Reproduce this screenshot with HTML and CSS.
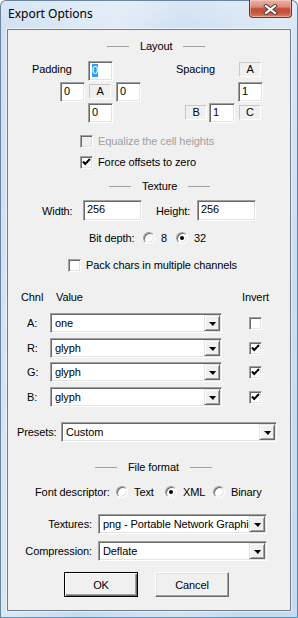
FILE: index.html
```html
<!DOCTYPE html>
<html>
<head>
<meta charset="utf-8">
<title>Export Options</title>
<link rel="stylesheet" href="styles.css">
</head>
<body>
<div class="window">
  <div class="titlebar">
    <span class="title">Export Options</span>
    <div class="close">
      <svg width="15" height="11" viewBox="0 0 15 11">
        <path d="M3 2 L12 9 M12 2 L3 9" stroke="#4a3a3a" stroke-width="4" stroke-linecap="square" fill="none"/>
        <path d="M3 2 L12 9 M12 2 L3 9" stroke="#ffffff" stroke-width="2.2" stroke-linecap="square" fill="none"/>
      </svg>
    </div>
  </div>
  <div class="client">
    <div class="hdr hdr-layout"><span class="hline"></span><span class="htext">Layout</span><span class="hline"></span></div>

    <div class="layout-block">
      <div class="pad-grid">
        <span class="glabel pad-lbl">Padding</span>
        <div class="edit g-c4 g-r1"><span class="sel">0</span></div>
        <div class="edit g-c2 g-r2">0</div>
        <div class="stat g-c4 g-r2">A</div>
        <div class="edit g-c6 g-r2">0</div>
        <div class="edit g-c4 g-r3">0</div>
      </div>
      <div class="sp-grid">
        <span class="glabel sp-lbl">Spacing</span>
        <div class="stat g-c6 g-r1">A</div>
        <div class="edit g-c6 g-r2">1</div>
        <div class="stat g-c2 g-r3">B</div>
        <div class="edit g-c4 g-r3">1</div>
        <div class="stat g-c6 g-r3">C</div>
      </div>
    </div>

    <div class="chk-row row-eq disabled"><span class="cbox"></span><span>Equalize the cell heights</span></div>
    <div class="chk-row row-force"><span class="cbox checked"><svg width="9" height="9" viewBox="0 0 9 9"><path d="M1 3.5 L3.2 6 L8 1" stroke="#000" stroke-width="2" fill="none"/></svg></span><span>Force offsets to zero</span></div>

    <div class="hdr hdr-texture"><span class="hline"></span><span class="htext">Texture</span><span class="hline"></span></div>

    <div class="wh-row">
      <span class="wlbl">Width:</span>
      <div class="edit wh-edit">256</div>
      <span class="wlbl hlbl">Height:</span>
      <div class="edit wh-edit">256</div>
    </div>

    <div class="radio-row bit-row">
      <span class="rlabel bit-lbl">Bit depth:</span>
      <span class="ritem bit-8"><span class="radio"></span><span>8</span></span>
      <span class="ritem"><span class="radio on"></span><span>32</span></span>
    </div>

    <div class="chk-row row-pack"><span class="cbox"></span><span>Pack chars in multiple channels</span></div>

    <div class="tbl-head"><span class="th-chnl">Chnl</span><span class="th-val">Value</span><span class="th-inv">Invert</span></div>

    <div class="ch-row row-a">
      <span class="ch-lbl">A:</span>
      <div class="combo ch-combo"><span class="cval">one</span><span class="dbtn"><i class="arrow"></i></span></div>
      <span class="cbox"></span>
    </div>
    <div class="ch-row row-r">
      <span class="ch-lbl">R:</span>
      <div class="combo ch-combo"><span class="cval">glyph</span><span class="dbtn"><i class="arrow"></i></span></div>
      <span class="cbox checked"><svg width="9" height="9" viewBox="0 0 9 9"><path d="M1 3.5 L3.2 6 L8 1" stroke="#000" stroke-width="2" fill="none"/></svg></span>
    </div>
    <div class="ch-row row-g">
      <span class="ch-lbl">G:</span>
      <div class="combo ch-combo"><span class="cval">glyph</span><span class="dbtn"><i class="arrow"></i></span></div>
      <span class="cbox checked"><svg width="9" height="9" viewBox="0 0 9 9"><path d="M1 3.5 L3.2 6 L8 1" stroke="#000" stroke-width="2" fill="none"/></svg></span>
    </div>
    <div class="ch-row row-b">
      <span class="ch-lbl">B:</span>
      <div class="combo ch-combo"><span class="cval">glyph</span><span class="dbtn"><i class="arrow"></i></span></div>
      <span class="cbox checked"><svg width="9" height="9" viewBox="0 0 9 9"><path d="M1 3.5 L3.2 6 L8 1" stroke="#000" stroke-width="2" fill="none"/></svg></span>
    </div>

    <div class="preset-row">
      <span class="pre-lbl">Presets:</span>
      <div class="combo pre-combo"><span class="cval">Custom</span><span class="dbtn"><i class="arrow"></i></span></div>
    </div>

    <div class="hdr hdr-file"><span class="hline"></span><span class="htext">File format</span><span class="hline"></span></div>

    <div class="radio-row fd-row">
      <span class="rlabel fd-lbl">Font descriptor:</span>
      <span class="ritem fd-text"><span class="radio"></span><span>Text</span></span>
      <span class="ritem fd-xml"><span class="radio on"></span><span>XML</span></span>
      <span class="ritem"><span class="radio"></span><span>Binary</span></span>
    </div>

    <div class="form-row row-tex">
      <span class="form-lbl">Textures:</span>
      <div class="combo form-combo"><span class="cval">png - Portable Network Graphics</span><span class="dbtn"><i class="arrow"></i></span></div>
    </div>
    <div class="form-row row-comp">
      <span class="form-lbl">Compression:</span>
      <div class="combo form-combo"><span class="cval">Deflate</span><span class="dbtn"><i class="arrow"></i></span></div>
    </div>

    <div class="btn-row">
      <div class="btn default">OK</div>
      <div class="btn">Cancel</div>
    </div>
  </div>
</div>
</body>
</html>
```

FILE: styles.css
```css
* { box-sizing: border-box; }
html, body { margin: 0; padding: 0; }
body {
  width: 298px;
  height: 618px;
  overflow: hidden;
  background: #ffffff;
  font-family: "Liberation Sans", Arial, sans-serif;
  font-size: 11px;
  letter-spacing: -0.1px;
  color: #000;
}

.window {
  width: 298px;
  height: 618px;
  display: flex;
  flex-direction: column;
  border: 1px solid #6a869f;
  border-bottom-color: #3aa2d6;
  border-radius: 6px 6px 0 0;
  padding: 0 6px 6px 6px;
  background:
    linear-gradient(100deg, rgba(255,255,255,0) 0%, rgba(255,255,255,0.35) 30%, rgba(255,255,255,0) 45%, rgba(255,255,255,0.25) 70%, rgba(255,255,255,0) 85%),
    linear-gradient(180deg, #d9e7f5 0px, #cfe0f2 30px, #c6dbf0 100%);
}

.titlebar {
  height: 28px;
  display: flex;
  align-items: flex-start;
  flex: none;
}
.title {
  font-family: "Noto Sans", "Open Sans", sans-serif;
  font-size: 12px;
  letter-spacing: 0;
  line-height: 14px;
  margin-top: 6px;
  margin-left: 1px;
  color: #000;
}
.close {
  margin-left: auto;
  margin-right: -1px;
  margin-top: -1px;
  width: 43px;
  height: 18px;
  border: 1px solid #7b2e24;
  border-top: none;
  border-radius: 0 0 4px 4px;
  background: linear-gradient(180deg, #eab3a7 0%, #dc8c7c 40%, #c24b36 52%, #c95a43 80%, #dd8a6e 100%);
  box-shadow: inset 0 0 0 1px rgba(255,210,200,0.5);
  display: flex;
  align-items: center;
  justify-content: center;
  padding-top: 1px;
}

.client {
  flex: 1;
  display: flex;
  flex-direction: column;
  background: #f0f0f0;
  border: 1px solid #6f7c8a;
  box-shadow: 0 0 0 1px rgba(255,255,255,0.55);
}

/* section headers */
.hdr {
  display: flex;
  align-items: center;
  height: 14px;
}
.hline {
  width: 22px;
  height: 1px;
  background: #a0a0a0;
}
.htext { margin: 0 11px; line-height: 14px; }
.hdr-layout { margin-top: 9px; padding-left: 99px; }
.hdr-texture { margin-top: 10px; padding-left: 101px; }
.hdr-file { margin-top: 18px; padding-left: 87px; }

/* 3D controls */
.edit {
  background: #fff;
  border: 1px solid;
  border-color: #a0a0a0 #ffffff #ffffff #a0a0a0;
  box-shadow: inset 1px 1px 0 #696969, inset -1px -1px 0 #e3e3e3;
  padding: 2px 0 0 3px;
  line-height: 13px;
  white-space: nowrap;
  overflow: hidden;
}
.sel {
  background: #3399ff;
  color: #fff;
  display: inline-block;
}
.stat {
  width: 22px;
  height: 15px;
  margin: 2px 0 0 1px;
  border: 1px solid;
  border-color: #c8c8c8 #ffffff #ffffff #c8c8c8;
  text-align: center;
  line-height: 13px;
}

/* layout block */
.layout-block {
  display: flex;
  margin-top: 8px;
  padding-left: 24px;
  gap: 35px;
}
.pad-grid, .sp-grid {
  display: grid;
  grid-template-rows: 20px 20px 20px;
  row-gap: 1px;
}
.pad-grid { grid-template-columns: 28px 25px 3px 25px 3px 25px; }
.sp-grid { grid-template-columns: 8px 21px 4px 26px 3px 25px; }
.glabel { line-height: 14px; padding-top: 1px; white-space: nowrap; }
.pad-lbl { grid-column: 1 / 4; grid-row: 1; }
.sp-lbl { grid-column: 1 / 5; grid-row: 1; }
.g-c2 { grid-column: 2; }
.g-c4 { grid-column: 4; }
.g-c6 { grid-column: 6; }
.g-r1 { grid-row: 1; }
.g-r2 { grid-row: 2; }
.g-r3 { grid-row: 3; }
.sp-grid .stat.g-r1 { margin-top: 1px; }

/* checkboxes */
.cbox {
  width: 13px;
  height: 13px;
  flex: none;
  background: #fff;
  border: 1px solid;
  border-color: #a0a0a0 #ffffff #ffffff #a0a0a0;
  box-shadow: inset 1px 1px 0 #696969, inset -1px -1px 0 #e3e3e3;
  display: flex;
  align-items: center;
  justify-content: center;
}
.cbox svg { display: block; }
.chk-row {
  display: flex;
  align-items: center;
  height: 13px;
  gap: 5px;
  line-height: 13px;
}
.row-eq { margin-top: 12px; padding-left: 72px; }
.row-force { margin-top: 8px; padding-left: 72px; }
.row-pack { margin-top: 14px; padding-left: 60px; }
.disabled { color: #a0a0a0; }
.disabled .cbox { background: #f0f0f0; }

/* width / height */
.wh-row {
  display: flex;
  align-items: center;
  height: 21px;
  margin-top: 7px;
  padding-left: 34px;
}
.wlbl { width: 41px; }
.hlbl { margin-left: 14px; }
.wh-edit { width: 59px; height: 21px; padding-top: 2px; }

/* radios */
.radio-row {
  display: flex;
  align-items: center;
  height: 14px;
}
.bit-row { margin-top: 10px; padding-left: 81px; }
.bit-lbl { width: 54px; }
.fd-row { margin-top: 11px; padding-left: 27px; }
.fd-lbl { width: 81px; }
.ritem { display: flex; align-items: center; gap: 6px; }
.bit-8 { width: 33px; }
.fd-text { width: 49px; }
.fd-xml { width: 48px; }
.radio {
  width: 12px;
  height: 12px;
  border-radius: 50%;
  background: #fff;
  border: 1px solid;
  border-color: #a0a0a0 #ffffff #ffffff #a0a0a0;
  box-shadow: inset 1px 1px 0 #696969, inset -1px -1px 0 #e3e3e3;
  display: flex;
  align-items: center;
  justify-content: center;
}
.radio.on::after {
  content: "";
  width: 4px;
  height: 4px;
  border-radius: 50%;
  background: #000;
}

/* channel table */
.tbl-head {
  display: flex;
  height: 14px;
  line-height: 14px;
  margin-top: 18px;
  padding-left: 13px;
}
.th-chnl { width: 35px; }
.th-val { width: 186px; }
.ch-row {
  display: flex;
  align-items: center;
  height: 20px;
  padding-left: 19px;
}
.row-a { margin-top: 9px; }
.row-r { margin-top: 5px; }
.row-g { margin-top: 4px; }
.row-b { margin-top: 5px; }
.ch-lbl { width: 23px; }
.ch-combo { width: 172px; margin-right: 27px; }

.combo {
  height: 20px;
  display: flex;
  background: #fff;
  border: 1px solid;
  border-color: #a0a0a0 #ffffff #ffffff #a0a0a0;
  box-shadow: inset 1px 1px 0 #696969, inset -1px -1px 0 #e3e3e3;
  padding: 1px;
}
.cval {
  flex: 1;
  min-width: 0;
  overflow: hidden;
  white-space: nowrap;
  padding-left: 3px;
  line-height: 17px;
}
.dbtn {
  width: 16px;
  flex: none;
  background: #f0f0f0;
  border: 1px solid;
  border-color: #e3e3e3 #696969 #696969 #e3e3e3;
  box-shadow: inset 1px 1px 0 #ffffff, inset -1px -1px 0 #a0a0a0;
  display: flex;
  align-items: center;
  justify-content: center;
}
.arrow {
  width: 0;
  height: 0;
  border-left: 4px solid transparent;
  border-right: 3px solid transparent;
  border-top: 4px solid #000;
  margin-top: 1px;
}

/* presets */
.preset-row {
  display: flex;
  align-items: center;
  margin-top: 15px;
  padding-left: 9px;
}
.pre-lbl { width: 44px; }
.pre-combo { width: 216px; }

/* file format rows */
.form-row {
  display: flex;
  align-items: center;
}
.form-lbl { width: 84px; text-align: right; margin-right: 6px; }
.form-combo { width: 169px; }
.row-tex { margin-top: 15px; }
.row-comp { margin-top: 7px; }

/* buttons */
.btn-row {
  display: flex;
  gap: 17px;
  margin-top: 11px;
  padding-left: 56px;
}
.btn {
  width: 74px;
  height: 25px;
  background: #f0f0f0;
  border: 1px solid;
  border-color: #ffffff #696969 #696969 #ffffff;
  box-shadow: inset -1px -1px 0 #a0a0a0, inset 1px 1px 0 #e3e3e3;
  display: flex;
  align-items: center;
  justify-content: center;
}
.btn.default {
  border: 1px solid #000;
  box-shadow: inset 1px 1px 0 #ffffff, inset -1px -1px 0 #696969, inset -2px -2px 0 #a0a0a0;
}
```
